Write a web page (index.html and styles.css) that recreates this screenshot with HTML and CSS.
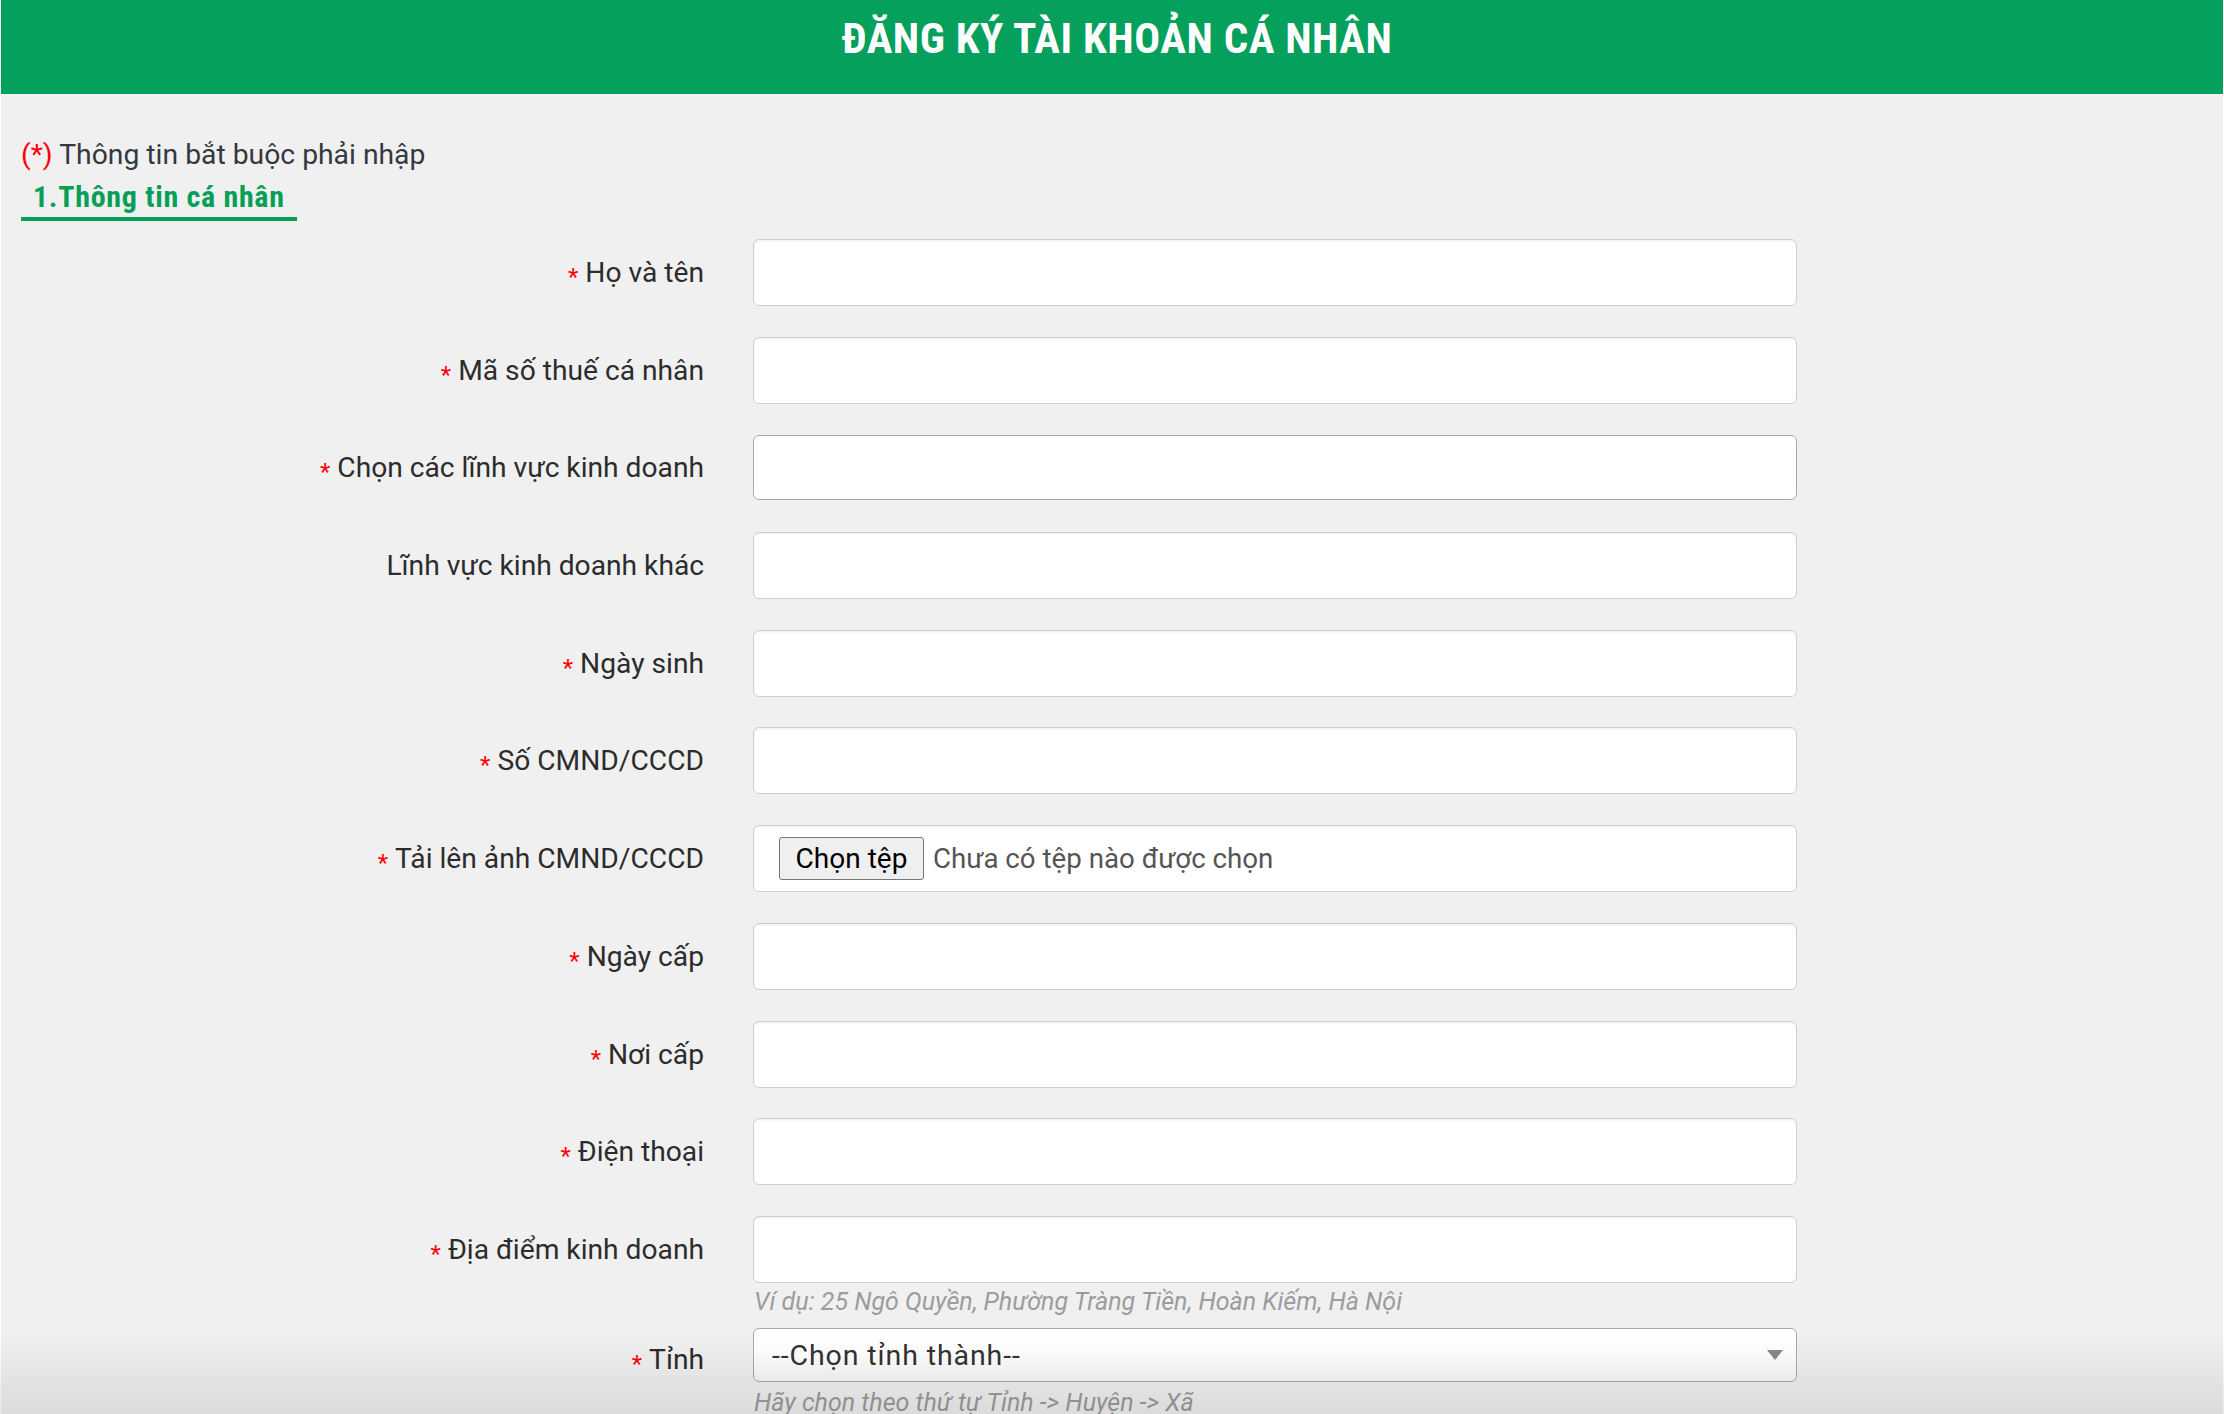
FILE: index.html
```html
<!DOCTYPE html>
<html lang="vi">
<head>
<meta charset="utf-8">
<title>Đăng ký tài khoản cá nhân</title>
<link rel="stylesheet" href="styles.css">
</head>
<body>
<div class="page">
  <header class="topbar">
    <h1 class="title">ĐĂNG KÝ TÀI KHOẢN CÁ NHÂN</h1>
  </header>
  <main class="content">
    <p class="notice"><span class="notice-mark">(*)</span> Thông tin bắt buộc phải nhập</p>
    <h2 class="section"><span class="section-text">1.Thông tin cá nhân</span></h2>
    <form class="form">
      <div class="row">
        <label class="label"><span class="req">*</span>Họ và tên</label>
        <div class="field"><input class="control" type="text"></div>
      </div>
      <div class="row">
        <label class="label"><span class="req">*</span>Mã số thuế cá nhân</label>
        <div class="field"><input class="control" type="text"></div>
      </div>
      <div class="row">
        <label class="label"><span class="req">*</span>Chọn các lĩnh vực kinh doanh</label>
        <div class="field"><div class="multi"></div></div>
      </div>
      <div class="row">
        <label class="label">Lĩnh vực kinh doanh khác</label>
        <div class="field"><input class="control" type="text"></div>
      </div>
      <div class="row">
        <label class="label"><span class="req">*</span>Ngày sinh</label>
        <div class="field"><input class="control" type="text"></div>
      </div>
      <div class="row">
        <label class="label"><span class="req">*</span>Số CMND/CCCD</label>
        <div class="field"><input class="control" type="text"></div>
      </div>
      <div class="row">
        <label class="label"><span class="req">*</span>Tải lên ảnh CMND/CCCD</label>
        <div class="field">
          <div class="control file">
            <span class="file-btn">Chọn tệp</span>
            <span class="file-name">Chưa có tệp nào được chọn</span>
          </div>
        </div>
      </div>
      <div class="row">
        <label class="label"><span class="req">*</span>Ngày cấp</label>
        <div class="field"><input class="control" type="text"></div>
      </div>
      <div class="row">
        <label class="label"><span class="req">*</span>Nơi cấp</label>
        <div class="field"><input class="control" type="text"></div>
      </div>
      <div class="row">
        <label class="label"><span class="req">*</span>Điện thoại</label>
        <div class="field"><input class="control" type="text"></div>
      </div>
      <div class="row row-hint">
        <label class="label"><span class="req">*</span>Địa điểm kinh doanh</label>
        <div class="field">
          <input class="control" type="text">
          <p class="hint">Ví dụ: 25 Ngô Quyền, Phường Tràng Tiền, Hoàn Kiếm, Hà Nội</p>
        </div>
      </div>
      <div class="row row-select">
        <label class="label label-select"><span class="req">*</span>Tỉnh</label>
        <div class="field">
          <div class="select">
            <span class="select-text">--Chọn tỉnh thành--</span>
            <svg class="select-arrow" width="16" height="10" viewBox="0 0 16 10"><path d="M0 0 H16 L8 10 Z" fill="#888"/></svg>
          </div>
          <p class="hint hint-select">Hãy chọn theo thứ tự Tỉnh -&gt; Huyện -&gt; Xã</p>
        </div>
      </div>
    </form>
  </main>
  <div class="bottom-shade"></div>
</div>
</body>
</html>
```
FILE: styles.css
```css
html, body {
  margin: 0;
  padding: 0;
}
body {
  background: #ffffff;
  font-family: Roboto, "Noto Sans", sans-serif;
  color: #333333;
  overflow: hidden;
}
.page {
  margin: 0 1px;
  background: #f0f0f0;
  min-height: 1414px;
}
.topbar {
  height: 94px;
  background: #05a05c;
  box-sizing: border-box;
  padding-top: 17px;
  display: flex;
  justify-content: center;
}
.title {
  margin: 0 0 0 10px;
  font-family: "Liberation Sans Narrow", "Roboto Condensed", "DejaVu Sans Condensed", sans-serif;
  font-weight: 700;
  font-size: 43px;
  line-height: 1;
  letter-spacing: 0.5px;
  color: #ffffff;
}
.content {
  padding-left: 20px;
}
.notice {
  margin: 0;
  padding-top: 41px;
  font-size: 28.3px;
  line-height: 40px;
  color: #343840;
}
.notice-mark {
  color: #ff0000;
}
.section {
  margin: 4px 0 0 0;
  font-size: 30px;
  line-height: 36px;
  font-weight: 700;
}
.section-text {
  display: inline-block;
  padding: 0 12px 2px 12px;
  border-bottom: 4px solid #079f58;
  color: #079f58;
  letter-spacing: 0.7px;
  font-family: "Liberation Sans Narrow", "Roboto Condensed", "DejaVu Sans Condensed", sans-serif;
}
.form {
  margin-top: 18px;
}
.row {
  display: grid;
  grid-template-columns: 683px 1044px;
  column-gap: 49px;
  margin-bottom: 30.7px;
}
.label {
  height: 67px;
  display: flex;
  align-items: center;
  justify-content: flex-end;
  font-size: 28.2px;
  color: #2c2c2c;
  white-space: nowrap;
}
.req {
  color: #ff0000;
  font-size: 24px;
  margin-right: 7px;
  line-height: 1;
  padding-top: 9px;
}
.field {
  min-width: 0;
}
.control {
  display: block;
  box-sizing: border-box;
  width: 100%;
  height: 67px;
  margin: 0;
  background: #ffffff;
  border: 1.5px solid #cfcfcf;
  border-radius: 6px;
  box-shadow: inset 0 1.5px 1.5px rgba(0, 0, 0, 0.06);
  font-family: Roboto, sans-serif;
  font-size: 28px;
  outline: none;
}
.multi {
  box-sizing: border-box;
  height: 65px;
  margin-top: 0.5px;
  background: #ffffff;
  border: 1.5px solid #aaaaaa;
  border-radius: 6px;
}
.file {
  display: flex;
  align-items: center;
  padding-left: 25px;
}
.file-btn {
  box-sizing: border-box;
  width: 145px;
  height: 43px;
  display: flex;
  align-items: center;
  justify-content: center;
  background: #efefef;
  border: 1.5px solid #767676;
  border-radius: 3px;
  font-size: 28px;
  color: #000000;
}
.file-name {
  margin-left: 9px;
  font-size: 27.7px;
  color: #555555;
}
.row-hint {
  margin-bottom: 11.5px;
}
.hint {
  margin: 4px 0 0 1px;
  font-size: 25px;
  line-height: 30px;
  font-style: italic;
  color: #9c9c9c;
}
.row-select .label-select {
  height: 62px;
}
.select {
  box-sizing: border-box;
  height: 54px;
  display: flex;
  align-items: center;
  justify-content: space-between;
  padding: 0 13px 0 18px;
  background: linear-gradient(#ffffff 50%, #f6f6f6);
  border: 1.5px solid #aaaaaa;
  border-radius: 6px;
}
.select-text {
  font-size: 28.5px;
  letter-spacing: 0.9px;
  color: #333333;
}
.hint-select {
  margin-top: 5.5px;
}
.bottom-shade {
  position: fixed;
  left: 0;
  right: 0;
  bottom: 0;
  height: 80px;
  background: linear-gradient(rgba(0, 0, 0, 0), rgba(0, 0, 0, 0.085));
  pointer-events: none;
}
```
